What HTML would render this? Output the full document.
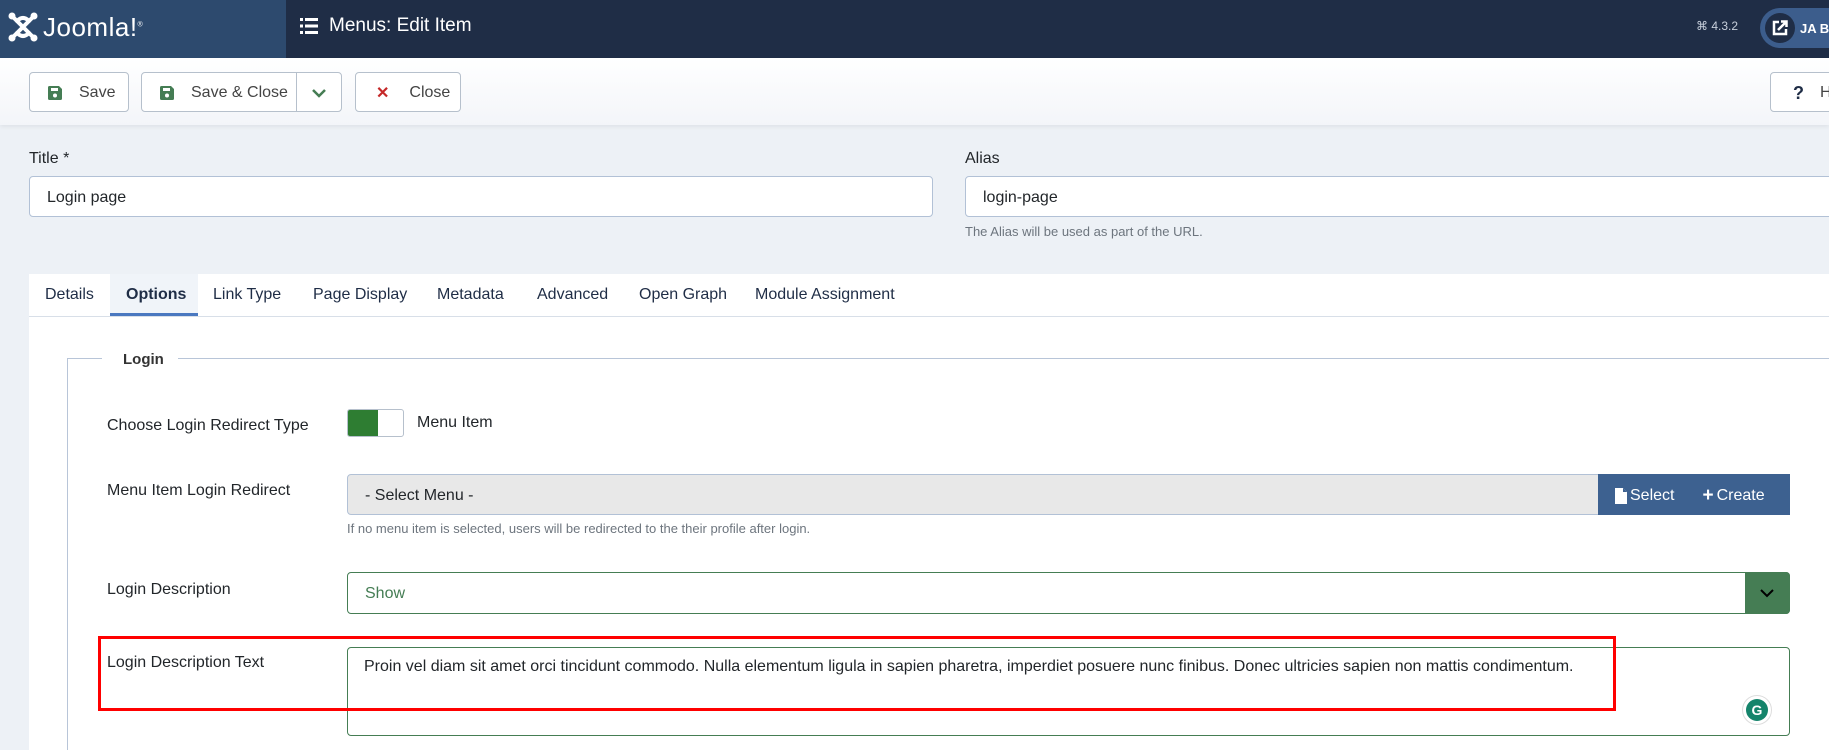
<!DOCTYPE html>
<html><head><meta charset="utf-8"><style>
*{box-sizing:border-box;margin:0;padding:0}
body{width:1829px;height:750px;overflow:hidden;background:#edf1f6;font-family:"Liberation Sans",sans-serif;color:#22262a;position:relative}
.abs{position:absolute}
.hdr{left:0;top:0;width:1829px;height:58px;background:#1f2d46}
.logo{left:0;top:0;width:286px;height:58px;background:#2d4a6e}
.tb{left:0;top:58px;width:1829px;height:67px;background:linear-gradient(#fff,#f3f5f9);box-shadow:0 2px 4px rgba(0,0,0,.06)}
.btn{position:absolute;top:72px;height:40px;background:#fff;border:1px solid #b6c0cc;border-radius:4px;font-size:16px;color:#444;display:flex;align-items:center;padding-top:2px}
.lbl{position:absolute;font-size:16px;color:#22262a;white-space:nowrap}
.inp{position:absolute;background:#fff;border:1px solid #b2c1d6;border-radius:4px;font-size:16px;display:flex;align-items:center;padding-left:17px;padding-top:2px}
.tab{position:absolute;top:286px;font-size:16px;color:#1f2d46}
</style></head><body>
<div class="abs hdr"></div>
<div class="abs logo">
<svg class="abs" style="left:8px;top:12px" width="30" height="30" viewBox="0 0 30 30"><g fill="none" stroke="#fff" stroke-width="4" stroke-linecap="round"><path d="M5 5 L25 25 M25 5 L5 25"/><path d="M9 9 Q15 3 21 9 M21 21 Q15 27 9 21"/></g><g fill="#fff"><circle cx="4" cy="4" r="3.5"/><circle cx="26" cy="4" r="3.5"/><circle cx="4" cy="26" r="3.5"/><circle cx="26" cy="26" r="3.5"/></g></svg>
<div class="abs" style="left:43px;top:12px;font-size:26px;color:#fff;font-weight:300;letter-spacing:0.5px;white-space:nowrap">Joomla!<sup style="font-size:7px">®</sup></div>
</div>
<svg class="abs" style="left:300px;top:17px" width="18" height="18" viewBox="0 0 18 18" fill="#fff"><rect x="0" y="1" width="3" height="3"/><rect x="5" y="1" width="13" height="3"/><rect x="0" y="7.5" width="3" height="3"/><rect x="5" y="7.5" width="13" height="3"/><rect x="0" y="14" width="3" height="3"/><rect x="5" y="14" width="13" height="3"/></svg>
<div class="abs" style="left:329px;top:15px;font-size:19px;color:#fff">Menus: Edit Item</div>
<div class="abs" style="left:1696px;top:19px;font-size:12px;color:#c8d0dc">⌘ 4.3.2</div>
<div class="abs" style="left:1760px;top:8px;width:90px;height:40px;border-radius:20px;background:#3c5d8c"></div>
<div class="abs" style="left:1765px;top:13px;width:30px;height:30px;border-radius:15px;background:#1f2d46"><svg style="margin:7px" width="16" height="16" viewBox="0 0 16 16"><path d="M7 2H2v12h12V9" fill="none" stroke="#fff" stroke-width="2.5"/><path d="M6 10L14 2M9 1.5h5.5V7" fill="none" stroke="#fff" stroke-width="2.5"/></svg></div>
<div class="abs" style="left:1800px;top:21px;font-size:13px;font-weight:bold;color:#fff;white-space:nowrap">JA Bl</div>

<div class="abs tb"></div>
<svg width="0" height="0" style="position:absolute"><defs><g id="fl"><path d="M0 1.5Q0 0 1.5 0H11L14 3V12.5Q14 14 12.5 14H1.5Q0 14 0 12.5Z" fill="#457d54"/><rect x="3" y="2" width="7" height="3" fill="#fff"/><circle cx="7" cy="9.5" r="2" fill="#fff"/></g></defs></svg>
<div class="btn" style="left:29px;width:100px"><svg style="margin-left:18px" width="14" height="14"><use href="#fl"/></svg><span style="margin-left:17px">Save</span></div>
<div class="btn" style="left:141px;width:201px"><svg style="margin-left:18px" width="14" height="14"><use href="#fl"/></svg><span style="margin-left:17px">Save &amp; Close</span><span style="position:absolute;left:154px;top:0;height:38px;border-left:1px solid #b6c0cc"></span><svg style="position:absolute;left:170px;top:15px" width="14" height="10" viewBox="0 0 14 10"><path d="M1 2L7 8L13 2" fill="none" stroke="#457d54" stroke-width="2.5"/></svg></div>
<div class="btn" style="left:355px;width:106px"><span style="margin-left:20px;color:#c52828;font-weight:bold">✕</span><span style="margin-left:20px">Close</span></div>
<div class="btn" style="left:1770px;width:80px"><span style="margin-left:22px;color:#1f2d46;font-weight:bold;font-size:18px">?</span><span style="margin-left:16px">H</span></div>

<div class="lbl" style="left:29px;top:150px">Title *</div>
<div class="inp" style="left:29px;top:176px;width:904px;height:41px">Login page</div>
<div class="lbl" style="left:965px;top:150px">Alias</div>
<div class="inp" style="left:965px;top:176px;width:900px;height:41px">login-page</div>
<div class="lbl" style="left:965px;top:224px;font-size:13px;color:#6d757e">The Alias will be used as part of the URL.</div>

<div class="abs" style="left:29px;top:274px;width:1800px;height:476px;background:#fff"></div>
<div class="abs" style="left:29px;top:316px;width:1800px;height:1px;background:#d8dfe8"></div>
<div class="abs" style="left:110px;top:274px;width:88px;height:42px;background:#f0f4f9;border-bottom:3px solid #4a78c0"></div>
<div class="tab" style="left:45px">Details</div>
<div class="tab" style="left:126px;font-weight:bold">Options</div>
<div class="tab" style="left:213px">Link Type</div>
<div class="tab" style="left:313px">Page Display</div>
<div class="tab" style="left:437px">Metadata</div>
<div class="tab" style="left:537px">Advanced</div>
<div class="tab" style="left:639px">Open Graph</div>
<div class="tab" style="left:755px">Module Assignment</div>

<div class="abs" style="left:67px;top:358px;width:1px;height:392px;background:#b8c5d8"></div>
<div class="abs" style="left:67px;top:358px;width:35px;height:1px;background:#b8c5d8"></div>
<div class="abs" style="left:178px;top:358px;width:1651px;height:1px;background:#b8c5d8"></div>
<div class="lbl" style="left:123px;top:351px;font-weight:bold;font-size:15px;color:#333">Login</div>

<div class="lbl" style="left:107px;top:417px">Choose Login Redirect Type</div>
<div class="abs" style="left:347px;top:409px;width:57px;height:28px;border:1px solid #b6c0cc;border-radius:3px;background:#fff;overflow:hidden"><div style="width:30px;height:26px;background:#2e7d32"></div></div>
<div class="lbl" style="left:417px;top:414px">Menu Item</div>

<div class="lbl" style="left:107px;top:482px">Menu Item Login Redirect</div>
<div class="inp" style="left:347px;top:474px;width:1252px;height:41px;background:#e8e8e8;border-radius:4px 0 0 4px">- Select Menu -</div>
<div class="abs" style="left:1598px;top:474px;width:192px;height:41px;background:#3d6190;color:#fff;font-size:16px;display:flex;align-items:center;padding-top:2px"><svg style="margin-left:17px" width="12" height="16" viewBox="0 0 12 16"><path d="M0 0H8L12 4V16H0Z" fill="#fff"/><path d="M8 0V4H12" fill="#3d6190"/></svg><span style="margin-left:3px">Select</span><span style="margin-left:28px;font-weight:bold;font-size:19px">+</span><span style="margin-left:3px">Create</span></div>
<div class="lbl" style="left:347px;top:521px;font-size:13px;color:#6d757e">If no menu item is selected, users will be redirected to the their profile after login.</div>

<div class="lbl" style="left:107px;top:581px">Login Description</div>
<div class="inp" style="left:347px;top:572px;width:1443px;height:42px;border-color:#457d54;color:#457d54">Show</div>
<div class="abs" style="left:1745px;top:572px;width:45px;height:42px;background:#457d54;border-radius:0 4px 4px 0"><svg style="margin:16px 0 0 15px" width="14" height="10" viewBox="0 0 14 10"><path d="M1 2 L7 8 L13 2" fill="none" stroke="#000" stroke-width="2"/></svg></div>

<div class="lbl" style="left:107px;top:654px">Login Description Text</div>
<div class="abs" style="left:347px;top:647px;width:1443px;height:89px;border:1px solid #457d54;border-radius:4px;background:#fff"></div>
<div class="lbl" style="left:364px;top:658px;color:#22262a">Proin vel diam sit amet orci tincidunt commodo. Nulla elementum ligula in sapien pharetra, imperdiet posuere nunc finibus. Donec ultricies sapien non mattis condimentum.</div>
<div class="abs" style="left:1742px;top:695px;width:30px;height:30px;border-radius:15px;border:1px solid #ddd;background:#fff"><div style="margin:3px;width:22px;height:22px;border-radius:11px;background:#15846b;color:#fff;font-size:14px;font-weight:bold;text-align:center;line-height:22px">G</div></div>
<div class="abs" style="left:98px;top:636px;width:1518px;height:75px;border:3px solid #f00"></div>
</body></html>
